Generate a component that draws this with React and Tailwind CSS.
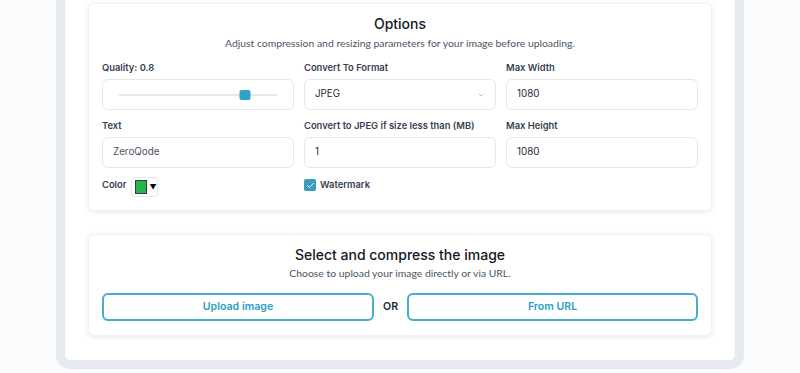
import { ChevronDown, Check } from "lucide-react";

const inter = { fontFamily: "Inter, 'Noto Sans', sans-serif" };
const lato = { fontFamily: "Lato, sans-serif" };

function Field({ label, children }) {
	return (
		<div className="flex flex-col gap-[4px]">
			<label className="text-[9.4px] leading-[14px] font-semibold text-[#374151]">
				{label}
			</label>
			{children}
		</div>
	);
}

function Box({ children, className = "" }) {
	return (
		<div
			className={
				"h-[31px] rounded-md border border-[#e5e7eb] bg-white flex items-center px-[10px] text-[9.8px] " +
				className
			}
		>
			{children}
		</div>
	);
}

export default function App() {
	return (
		<div
			className="h-[373px] w-[800px] overflow-hidden bg-[#fafbfc] px-[56px]"
			style={inter}
		>
			<div className="rounded-b-[14px] border-x-[9px] border-b-[9px] border-[#e6eaee] bg-white px-[23px] pt-[3px] pb-[24px]">
				{/* options card */}
				<div className="rounded-md bg-white border border-[#f1f2f4] shadow-[0_1px_5px_rgba(0,0,0,0.10)] px-[13px] pt-[9px] pb-[13px]">
					<h2 className="text-center text-[14px] leading-[22px] font-medium text-[#111827]">
						Options
					</h2>
					<p
						className="text-center text-[10.4px] leading-[16px] text-[#4b5563]"
						style={lato}
					>
						Adjust compression and resizing parameters for your image before uploading.
					</p>
					<div className="mt-[10px] grid grid-cols-3 gap-x-[10px] gap-y-[9px]">
						<Field label="Quality: 0.8">
							<div className="h-[31px] rounded-md border border-[#e5e7eb] bg-white flex items-center px-[16px]">
								<div className="relative h-[2px] w-full bg-[#e5e7eb]">
									<div className="absolute left-[80%] top-1/2 h-[10px] w-[11px] -translate-x-1/2 -translate-y-1/2 rounded-[2px] bg-[#2ea3c8]" />
								</div>
							</div>
						</Field>
						<Field label="Convert To Format">
							<Box className="justify-between text-[#1f2937]">
								<span>JPEG</span>
								<ChevronDown size={8} className="text-[#9ca3af]" />
							</Box>
						</Field>
						<Field label="Max Width">
							<Box className="text-[#1f2937]">1080</Box>
						</Field>
						<Field label="Text">
							<Box className="text-[#4b5563]">ZeroQode</Box>
						</Field>
						<Field label="Convert to JPEG if size less than (MB)">
							<Box className="text-[#1f2937]">1</Box>
						</Field>
						<Field label="Max Height">
							<Box className="text-[#1f2937]">1080</Box>
						</Field>
						<div className="flex items-start gap-[4px]">
							<span className="mt-[1px] text-[9.4px] leading-[14px] font-semibold text-[#374151]">
								Color
							</span>
							<div className="flex h-[20px] w-[27px] items-center gap-[2px] rounded-[3px] border border-[#e5e7eb] bg-white pl-[3px]">
								<div className="h-[14px] w-[14px] border border-[#3b3b3b] bg-[#22b74b]" />
								<span className="text-[7px] leading-none text-black">▼</span>
							</div>
						</div>
						<div className="flex items-center gap-[4px] self-start pt-[1px]">
							<div className="flex h-[12px] w-[12px] items-center justify-center rounded-[2px] bg-[#3b9cbb]">
								<Check size={9} strokeWidth={2.5} className="text-white" />
							</div>
							<span className="text-[9.4px] leading-[14px] font-semibold text-[#374151]">
								Watermark
							</span>
						</div>
					</div>
				</div>

				{/* upload card */}
				<div className="mt-[23px] rounded-md bg-white border border-[#f1f2f4] shadow-[0_1px_5px_rgba(0,0,0,0.10)] px-[13px] pt-[9px] pb-[14px]">
					<h2 className="text-center text-[14px] leading-[22px] font-medium text-[#111827]">
						Select and compress the image
					</h2>
					<p
						className="text-center text-[10.4px] leading-[14px] text-[#4b5563]"
						style={lato}
					>
						Choose to upload your image directly or via URL.
					</p>
					<div className="mt-[13px] flex items-center gap-[9px]">
						<button className="h-[28px] w-[272px] rounded-md border-2 border-[#4aaccb] text-[10.6px] font-semibold text-[#2d9fc3]">
							Upload image
						</button>
						<span className="text-[10.6px] font-semibold text-[#1f2937]">OR</span>
						<button className="h-[28px] flex-1 rounded-md border-2 border-[#4aaccb] text-[10.6px] font-semibold text-[#2d9fc3]">
							From URL
						</button>
					</div>
				</div>
			</div>
		</div>
	);
}
